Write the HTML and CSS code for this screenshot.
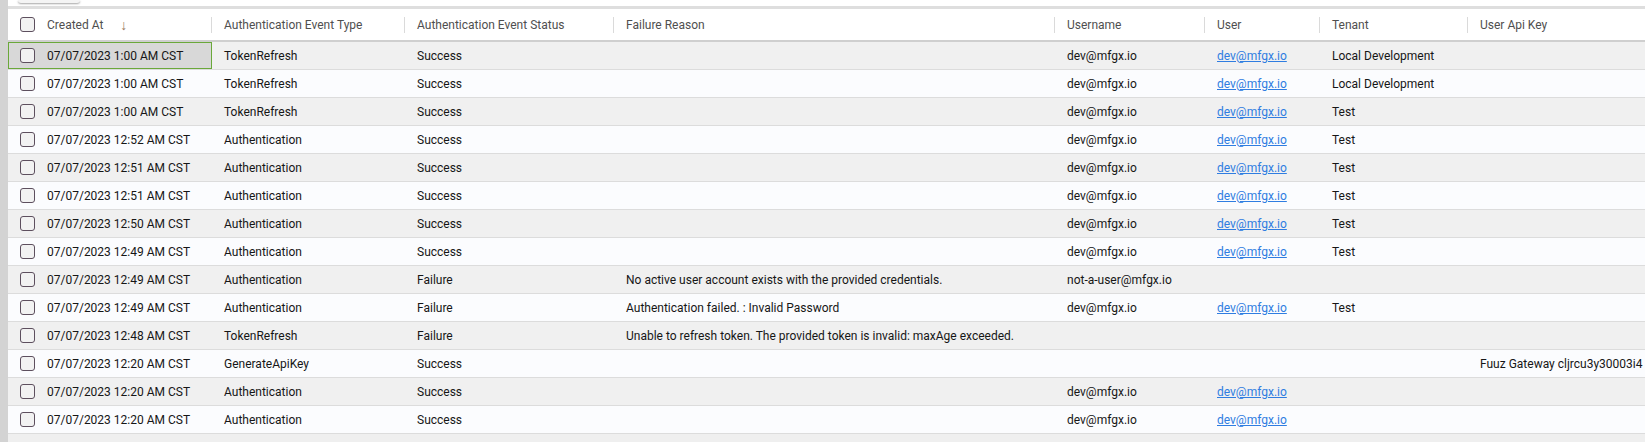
FILE: index.html
```html
<!DOCTYPE html>
<html lang="en">
<head>
  <meta charset="UTF-8" />
  <title>Authentication Events</title>
  <link rel="stylesheet" href="styles.css">
</head>
<body>
  <div class="page">
    <div class="side-strip"></div>

    <div class="main">
      <div class="toolbar">
        <button class="tool-btn"></button>
      </div>
      <div class="divider"></div>

      <div class="grid">
        <!-- Header -->
        <div class="grid-row header">
          <div class="cell first"><span class="check"></span>Created At<span class="sort">&#8595;</span></div>
          <div class="cell">Authentication Event Type</div>
          <div class="cell">Authentication Event Status</div>
          <div class="cell">Failure Reason</div>
          <div class="cell">Username</div>
          <div class="cell">User</div>
          <div class="cell">Tenant</div>
          <div class="cell last">User Api Key</div>
        </div>

        <div class="grid-row odd">
          <div class="cell first focused"><span class="check"></span>07/07/2023 1:00 AM CST</div>
          <div class="cell">TokenRefresh</div>
          <div class="cell">Success</div>
          <div class="cell"></div>
          <div class="cell">dev@mfgx.io</div>
          <div class="cell"><a href="#">dev@mfgx.io</a></div>
          <div class="cell">Local Development</div>
          <div class="cell last"></div>
        </div>

        <div class="grid-row even">
          <div class="cell first"><span class="check"></span>07/07/2023 1:00 AM CST</div>
          <div class="cell">TokenRefresh</div>
          <div class="cell">Success</div>
          <div class="cell"></div>
          <div class="cell">dev@mfgx.io</div>
          <div class="cell"><a href="#">dev@mfgx.io</a></div>
          <div class="cell">Local Development</div>
          <div class="cell last"></div>
        </div>

        <div class="grid-row odd">
          <div class="cell first"><span class="check"></span>07/07/2023 1:00 AM CST</div>
          <div class="cell">TokenRefresh</div>
          <div class="cell">Success</div>
          <div class="cell"></div>
          <div class="cell">dev@mfgx.io</div>
          <div class="cell"><a href="#">dev@mfgx.io</a></div>
          <div class="cell">Test</div>
          <div class="cell last"></div>
        </div>

        <div class="grid-row even">
          <div class="cell first"><span class="check"></span>07/07/2023 12:52 AM CST</div>
          <div class="cell">Authentication</div>
          <div class="cell">Success</div>
          <div class="cell"></div>
          <div class="cell">dev@mfgx.io</div>
          <div class="cell"><a href="#">dev@mfgx.io</a></div>
          <div class="cell">Test</div>
          <div class="cell last"></div>
        </div>

        <div class="grid-row odd">
          <div class="cell first"><span class="check"></span>07/07/2023 12:51 AM CST</div>
          <div class="cell">Authentication</div>
          <div class="cell">Success</div>
          <div class="cell"></div>
          <div class="cell">dev@mfgx.io</div>
          <div class="cell"><a href="#">dev@mfgx.io</a></div>
          <div class="cell">Test</div>
          <div class="cell last"></div>
        </div>

        <div class="grid-row even">
          <div class="cell first"><span class="check"></span>07/07/2023 12:51 AM CST</div>
          <div class="cell">Authentication</div>
          <div class="cell">Success</div>
          <div class="cell"></div>
          <div class="cell">dev@mfgx.io</div>
          <div class="cell"><a href="#">dev@mfgx.io</a></div>
          <div class="cell">Test</div>
          <div class="cell last"></div>
        </div>

        <div class="grid-row odd">
          <div class="cell first"><span class="check"></span>07/07/2023 12:50 AM CST</div>
          <div class="cell">Authentication</div>
          <div class="cell">Success</div>
          <div class="cell"></div>
          <div class="cell">dev@mfgx.io</div>
          <div class="cell"><a href="#">dev@mfgx.io</a></div>
          <div class="cell">Test</div>
          <div class="cell last"></div>
        </div>

        <div class="grid-row even">
          <div class="cell first"><span class="check"></span>07/07/2023 12:49 AM CST</div>
          <div class="cell">Authentication</div>
          <div class="cell">Success</div>
          <div class="cell"></div>
          <div class="cell">dev@mfgx.io</div>
          <div class="cell"><a href="#">dev@mfgx.io</a></div>
          <div class="cell">Test</div>
          <div class="cell last"></div>
        </div>

        <div class="grid-row odd">
          <div class="cell first"><span class="check"></span>07/07/2023 12:49 AM CST</div>
          <div class="cell">Authentication</div>
          <div class="cell">Failure</div>
          <div class="cell">No active user account exists with the provided credentials.</div>
          <div class="cell">not-a-user@mfgx.io</div>
          <div class="cell"></div>
          <div class="cell"></div>
          <div class="cell last"></div>
        </div>

        <div class="grid-row even">
          <div class="cell first"><span class="check"></span>07/07/2023 12:49 AM CST</div>
          <div class="cell">Authentication</div>
          <div class="cell">Failure</div>
          <div class="cell">Authentication failed. : Invalid Password</div>
          <div class="cell">dev@mfgx.io</div>
          <div class="cell"><a href="#">dev@mfgx.io</a></div>
          <div class="cell">Test</div>
          <div class="cell last"></div>
        </div>

        <div class="grid-row odd">
          <div class="cell first"><span class="check"></span>07/07/2023 12:48 AM CST</div>
          <div class="cell">TokenRefresh</div>
          <div class="cell">Failure</div>
          <div class="cell">Unable to refresh token. The provided token is invalid: maxAge exceeded.</div>
          <div class="cell"></div>
          <div class="cell"></div>
          <div class="cell"></div>
          <div class="cell last"></div>
        </div>

        <div class="grid-row even">
          <div class="cell first"><span class="check"></span>07/07/2023 12:20 AM CST</div>
          <div class="cell">GenerateApiKey</div>
          <div class="cell">Success</div>
          <div class="cell"></div>
          <div class="cell"></div>
          <div class="cell"></div>
          <div class="cell"></div>
          <div class="cell last">Fuuz Gateway cljrcu3y30003i4</div>
        </div>

        <div class="grid-row odd">
          <div class="cell first"><span class="check"></span>07/07/2023 12:20 AM CST</div>
          <div class="cell">Authentication</div>
          <div class="cell">Success</div>
          <div class="cell"></div>
          <div class="cell">dev@mfgx.io</div>
          <div class="cell"><a href="#">dev@mfgx.io</a></div>
          <div class="cell"></div>
          <div class="cell last"></div>
        </div>

        <div class="grid-row even">
          <div class="cell first"><span class="check"></span>07/07/2023 12:20 AM CST</div>
          <div class="cell">Authentication</div>
          <div class="cell">Success</div>
          <div class="cell"></div>
          <div class="cell">dev@mfgx.io</div>
          <div class="cell"><a href="#">dev@mfgx.io</a></div>
          <div class="cell"></div>
          <div class="cell last"></div>
        </div>
      </div>
    </div>
  </div>
</body>
</html>
```

FILE: styles.css
```css
:root {
  --row-odd: #f0f0f0;
  --row-even: #fbfcfe;
  --row-line: #dcdcdc;
  --text: #161616;
  --head-text: #4f4f4f;
  --link: #2f7de1;
}

html, body {
  margin: 0;
  height: 100%;
  overflow: hidden;
}

body {
  font-family: Roboto, "Liberation Sans", Arial, sans-serif;
  font-size: 12px;
  color: var(--text);
  background: #efefef;
}

.page {
  display: flex;
  height: 100%;
}

/* thin grey strip along the left edge */
.side-strip {
  width: 8px;
  flex: 0 0 8px;
  background: #d3d3d3;
}

.main {
  flex: 1;
  min-width: 0;
  display: flex;
  flex-direction: column;
  background: #efefef;
  overflow: hidden;
}

.toolbar {
  height: 6px;
  background: #fff;
  padding-left: 10px;
  overflow: hidden;
}

.tool-btn {
  display: block;
  width: 62px;
  height: 3px;
  padding: 0;
  border: none;
  background: #f4f4f4;
  border-radius: 0 0 3px 3px;
  box-shadow: 0 1px 2px rgba(0, 0, 0, 0.35);
}

.divider {
  height: 3px;
  background: #dedede;
}

.grid {
  overflow: hidden;
}

.grid-row {
  display: grid;
  grid-template-columns: 204px 193px 209px 441px 150px 115px 148px 185px;
  height: 27px;
  border-bottom: 1px solid var(--row-line);
}

.grid-row.odd { background: var(--row-odd); }
.grid-row.even { background: var(--row-even); }

.grid-row.header {
  height: 31px;
  background: #fff;
  color: var(--head-text);
  border-bottom: 2px solid #cfcfcf;
}

.cell {
  display: flex;
  align-items: center;
  padding: 0 12px;
  white-space: nowrap;
  position: relative;
  min-width: 0;
}

/* column resize separators in the header */
.header .cell::after {
  content: "";
  position: absolute;
  right: 0;
  top: 8px;
  height: 16px;
  border-right: 1px solid #dadada;
}

.header .cell.last::after {
  display: none;
}

.check {
  width: 13px;
  height: 13px;
  border: 1.5px solid #5d4f5e;
  border-radius: 3px;
  background: #f2f2f2;
  margin-right: 12px;
  flex: 0 0 auto;
}

.sort {
  margin-left: 17px;
  color: #9a7b60;
  font-size: 14px;
}

.cell.focused {
  background: #d8d8d8;
  box-shadow: inset 0 0 0 1px #6aa83a;
}

a {
  color: var(--link);
  text-decoration: underline;
}
```
